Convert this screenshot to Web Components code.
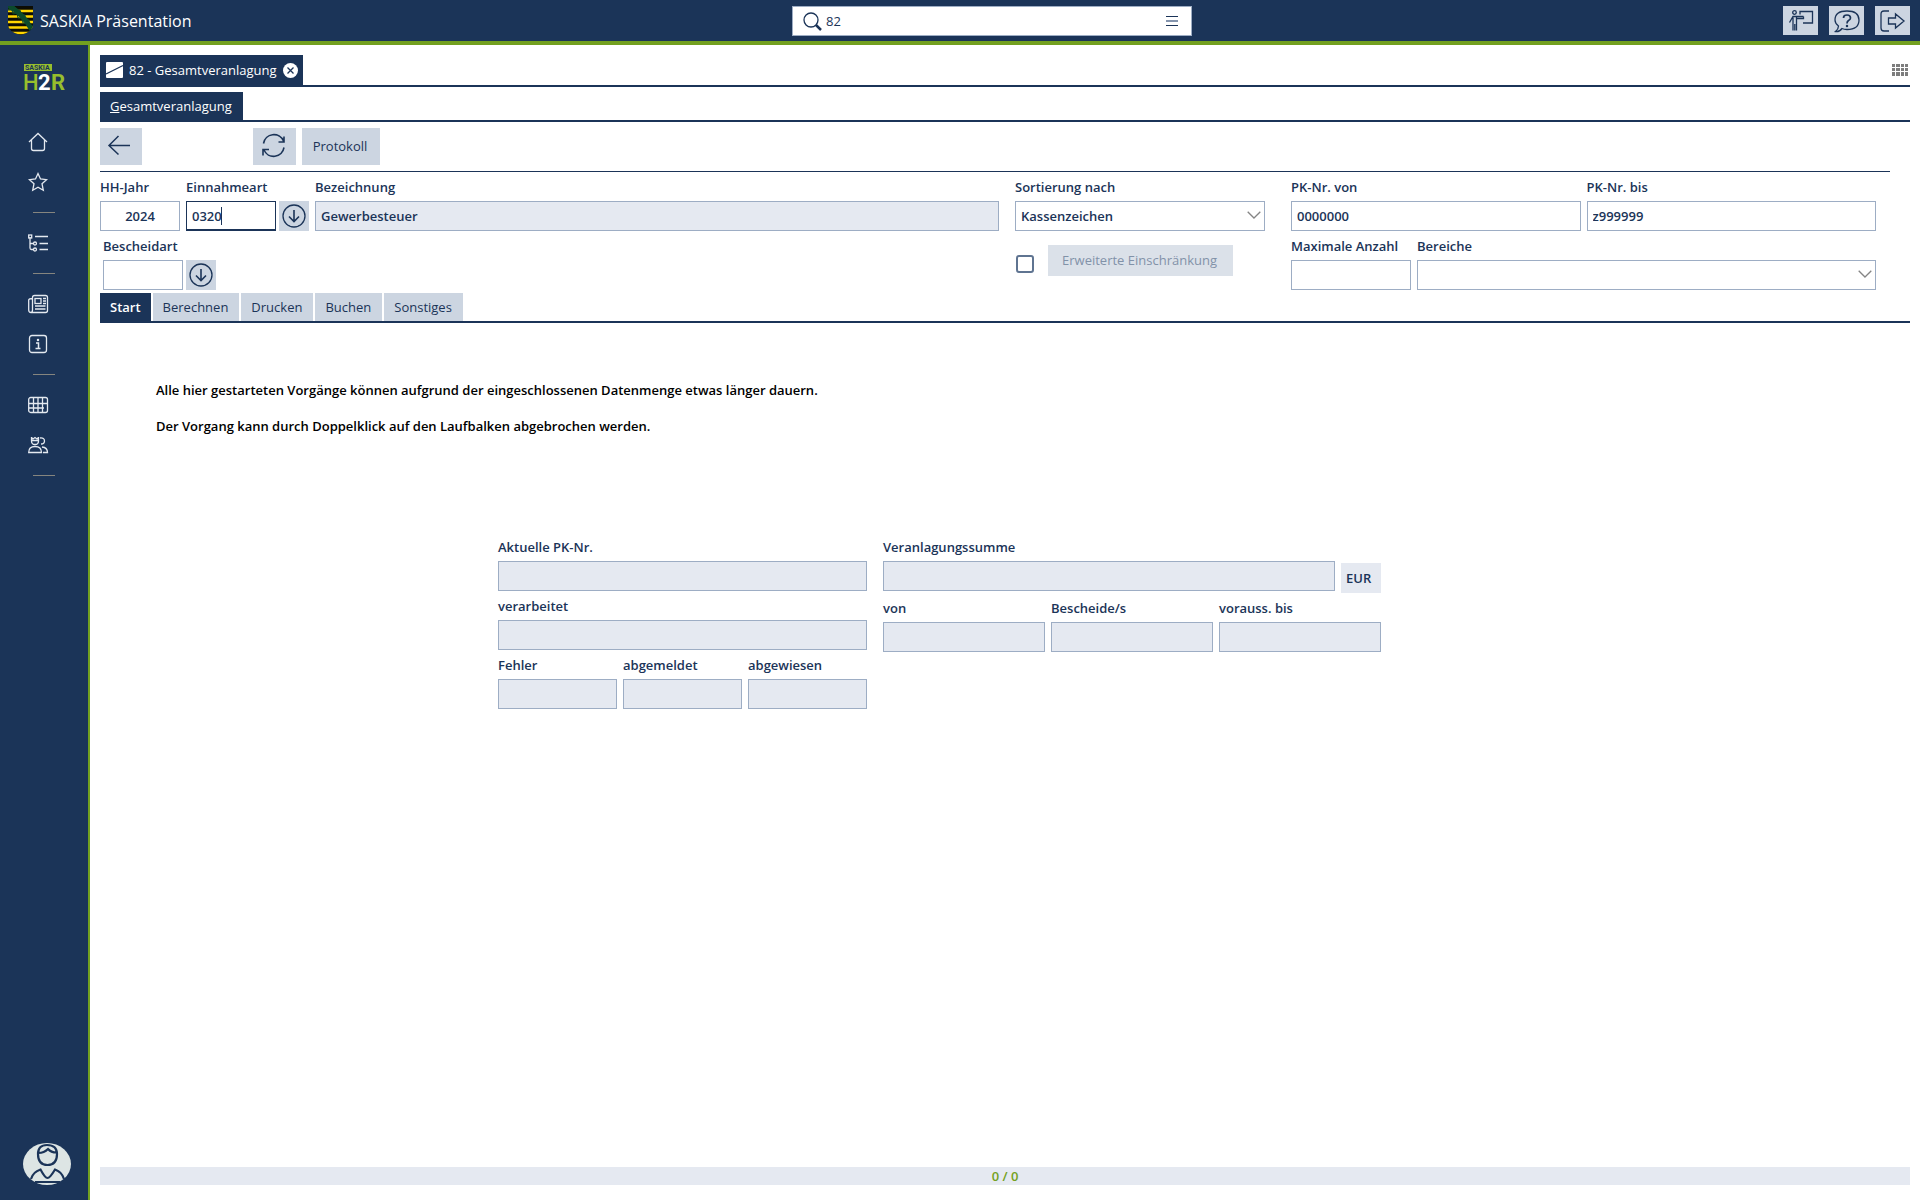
<!DOCTYPE html>
<html lang="de">
<head>
<meta charset="UTF-8">
<meta name="viewport" content="width=device-width, initial-scale=1.0">
<title>SASKIA Präsentation</title>
<style>
    html, body {
        margin: 0;
        padding: 0;
    }

    body {
        --navy: #1b3458;
        --green: #73a020;
        --button: #ccd5e1;
        --readonly: #e5e9f1;
        --border: #9dadc4;
        font-family: "Open Sans", "Noto Sans", sans-serif;
        font-size: 13px;
        line-height: 20px;
        color: var(--navy);
        background: #fff;
    }
</style>
</head>
<body>
<h2r-app></h2r-app>

<script>
    // Alle Symbole der Oberfläche
    const ICONS = {
        home: '<path d="M1 10 L10 1.500 L19 10 M3.500 8 V16.500 Q3.500 18.500 5.500 18.500 H14.500 Q16.500 18.500 16.500 16.500 V8"/>',
        star: '<path d="M10 1.500 L12.500 7 L18.500 7.700 L14 11.700 L15.300 18.300 L10 15.200 L4.700 18.300 L6 11.700 L1.500 7.700 L7.500 7 Z"/>',
        tree: '<path d="M2 4 V15 Q2 16.500 3.500 16.500 H5.500 M2 10.500 H5.500 M7 3.500 H20 M11.500 10.500 H20 M11.500 16.500 H20"/><rect x="0.700" y="2" width="3" height="3"/><circle cx="7" cy="10.500" r="1.500"/><circle cx="7" cy="16.500" r="1.500"/>',
        news: '<path d="M4.500 16 V3.500 Q4.500 1.500 6.500 1.500 H17.500 Q19.500 1.500 19.500 3.500 V16.500 Q19.500 18.500 17.500 18.500 H3 Q0.700 18.500 0.700 16 V6 Q0.700 4.500 4.500 4.500 M4.500 16 Q4.500 18.500 2.500 18.500"/><rect x="7" y="4.500" width="6" height="5"/><path d="M15 4.500 H18 M15 7 H18 M15 9.500 H18 M7 12 H17.500 M7 15 H17.500"/>',
        info: '<rect x="1.500" y="1.500" width="17" height="17" rx="2.500"/><path d="M8 9 H10.500 V14.500 M7.500 14.500 H12.500" stroke-width="1.500"/><circle cx="10" cy="6" r="0.600"/>',
        table: '<rect x="0.700" y="2.500" width="18.800" height="15" rx="2"/><path d="M1 8.500 H19 M1 13 H16 M5.500 3 V17 M10 3 V17 M14.500 3 V17"/>',
        people: '<path d="M0.700 17.500 Q0.700 11.500 7 11.500 Q13.500 11.500 13.500 17.500 Z M3.500 2 V6 Q3.500 9.500 7 9.500 Q10.500 9.500 10.500 6 V2 M3.500 2.500 L5 4 L7 2.500 L9 4 L10.500 2.500 M3.500 5.500 H10.500 M12 3 Q16.500 2.500 16.500 6 Q16.500 9 13 9 M14 12 Q19.500 12.500 19.500 17.500 H15"/>',
        search: '<circle cx="8" cy="8" r="7"/><path d="M13 13 L18 18" stroke-width="2.500"/>',
        menu: '<path d="M0 1.500 H12 M0 10.500 H12" stroke-width="1"/><path d="M0 6 H12" stroke="#8494ad" stroke-width="2"/>',
        trainer: '<circle cx="5.500" cy="2.500" r="1.800"/><path d="M11 4.500 V1.500 H23.500 V13 H14 M4 20.500 V7.500 M7.500 20.500 V7 M5.800 14 V20.500 M0.500 12.500 L4 6.500 H14.500 M7 8.500 H14.500 V6.500"/>',
        help: '<path d="M4.500 16 Q1 13.500 1 10 Q1 1 13 1 Q25 1 25 10 Q25 19.500 13 19.500 Q10 19.500 8 18.500 Q5.500 22 1.500 21.500 Q4.500 19 4.500 16 Z"/><path d="M9.500 8 Q9.500 5 13 5 Q16.500 5 16.500 8 Q16.500 9.500 14.500 10.500 Q13 11.500 13 13.500" stroke-width="1.700"/><circle cx="13" cy="16" r="0.600"/>',
        logout: '<path d="M9 1 H4 Q1 1 1 4 V18 Q1 21 4 21 H9 M8.500 8 H15.500 V4 L24 11 L15.500 18 V14 H8.500 Z"/>',
        apps: '<g fill="#7d7d7d" stroke="none"><path d="M0 0 H3 V3 H0Z M4 0 H8 V3 H4Z M9 0 H12 V3 H9Z M13 0 H16 V3 H13Z M0 4 H3 V7 H0Z M4 4 H8 V7 H4Z M9 4 H12 V7 H9Z M13 4 H16 V7 H13Z M0 8 H3 V12 H0Z M4 8 H8 V12 H4Z M9 8 H12 V12 H9Z M13 8 H16 V12 H13Z"/></g>',
        back: '<path d="M21 10.500 H0 M9.500 1 L0 10.500 L9.500 19.500" stroke-width="1.500"/>',
        refresh: '<path d="M1.500 9.500 A10.500 10.500 0 0 1 21.500 7 M22 2.500 V8 H16.500 M22 13.500 A10.500 10.500 0 0 1 2 16 M1 21.500 V15.500 H7" stroke-width="1.600"/>',
        down: '<circle cx="12" cy="12" r="11"/><path d="M12 6 V17.500 M7 12.500 L12 17.500 L17 12.500" stroke-width="1.600"/>',
        chevron: '<path d="M0.700 0.700 L7 7 L13.300 0.700" stroke="#858585"/>',
        sheet: '<rect width="17" height="16" rx="1" fill="#fff" stroke="none"/><path d="M0 12 L17 3.500" stroke="#1b3458"/>',
        close: '<circle cx="7.500" cy="7.500" r="7.500" fill="#fff" stroke="none"/><path d="M4.500 4.500 L10.500 10.500 M10.500 4.500 L4.500 10.500" stroke="#1b3458" stroke-width="1.300"/>',
        user: '<ellipse cx="24" cy="21" rx="24" ry="21" fill="#dde5e4" stroke="none"/><path d="M24 2 Q34 2 34 11 Q34 22 24.500 22 Q15 22 15 11 Q15 2 24 2 Z M15.500 10 Q21 10 25 6 Q28 9.500 33.500 9.500 M8 36 Q10 29 17.500 26.500 Q22 35 24.500 35 Q27 35 32 26.500 Q39 29 41 36 M12 39 H37" stroke-width="2.200"/>',
        crest: '<clipPath id="schild"><path d="M0 0 H25 V18 Q25 26 12.500 29 Q0 26 0 18 Z"/></clipPath><g clip-path="url(#schild)"><rect width="25" height="29" fill="#0d0d05" stroke="none"/><path d="M0 5 H25 M0 10.500 H25 M0 16 H25 M0 21.500 H25 M0 27 H25" stroke="#ffd500" stroke-width="2.600"/><path d="M-1 -1 Q14 6 24 24" stroke="#0c4a2c" stroke-width="5"/><path d="M3 0 L7 1 L8 5 L12 4 L13 9 L17 9 L17 14 L21 14 L21 19 L25 20 M0 4 L4 4 L5 8 L9 7 L10 12 L14 12 L15 17 L19 18" stroke="#0c4a2c" stroke-width="1"/></g>'
    };

    class H2rIcon extends HTMLElement {
        constructor() {
            super();
            this.attachShadow({ mode: 'open' });
        }

        connectedCallback() {
            const w = this.getAttribute('w') || 20;
            const h = this.getAttribute('h') || 20;
            this.shadowRoot.innerHTML = `
                <style>
                    :host { display: inline-block; flex: none; line-height: 0; }
                    svg { display: block; overflow: visible; fill: none; stroke: currentColor; stroke-width: 1.3; }
                </style>
                <svg width="${w}" height="${h}" viewBox="0 0 ${w} ${h}" aria-hidden="true">${ICONS[this.getAttribute('name')]}</svg>
            `;
        }
    }
    customElements.define('h2r-icon', H2rIcon);

    // Schaltfläche
    class H2rButton extends HTMLElement {
        constructor() {
            super();
            this.attachShadow({ mode: 'open' });
        }

        connectedCallback() {
            const disabled = this.hasAttribute('disabled') ? 'disabled' : '';
            this.shadowRoot.innerHTML = `
                <style>
                    :host { display: block; flex: none; }
                    button {
                        display: flex;
                        align-items: center;
                        justify-content: center;
                        box-sizing: border-box;
                        width: 100%;
                        height: 100%;
                        padding: var(--button-padding, 0);
                        border: 0;
                        background: var(--button);
                        color: var(--navy);
                        font: inherit;
                        cursor: pointer;
                    }
                    button:disabled { opacity: 0.7; color: #4d6484; }
                </style>
                <button type="button" aria-label="${this.getAttribute('label') || this.textContent}" ${disabled}><slot></slot></button>
            `;
        }
    }
    customElements.define('h2r-button', H2rButton);

    // Eingabefeld mit Beschriftung darüber
    class H2rField extends HTMLElement {
        constructor() {
            super();
            this.attachShadow({ mode: 'open' });
        }

        connectedCallback() {
            const readonly = this.hasAttribute('readonly') ? 'readonly' : '';
            const caret = this.hasAttribute('active') ? '<span class="caret"></span>' : '';
            this.shadowRoot.innerHTML = `
                <style>
                    :host { display: block; min-width: 0; font-weight: 600; }
                    label { display: block; margin-bottom: 4px; white-space: nowrap; }
                    .box { position: relative; }
                    input {
                        display: block;
                        box-sizing: border-box;
                        width: 100%;
                        height: 30px;
                        padding: 0 5px;
                        border: 1px solid var(--border);
                        border-radius: 0;
                        outline: 0;
                        background: #fff;
                        color: var(--navy);
                        font: inherit;
                    }
                    input:read-only { background: var(--readonly); }
                    :host([center]) input { text-align: center; }
                    :host([active]) input { border-color: var(--navy); border-bottom-width: 2px; }
                    .caret {
                        position: absolute;
                        left: 35px;
                        top: 6px;
                        width: 1px;
                        height: 18px;
                        background: var(--navy);
                    }
                </style>
                <label for="feld">${this.getAttribute('label')}</label>
                <div class="box">
                    <input id="feld" type="text" value="${this.getAttribute('value') || ''}" ${readonly}>
                    ${caret}
                </div>
            `;
        }
    }
    customElements.define('h2r-field', H2rField);

    // Auswahlliste mit Beschriftung darüber
    class H2rSelect extends HTMLElement {
        constructor() {
            super();
            this.attachShadow({ mode: 'open' });
        }

        connectedCallback() {
            this.shadowRoot.innerHTML = `
                <style>
                    :host { display: block; min-width: 0; font-weight: 600; }
                    label { display: block; margin-bottom: 4px; }
                    .box { position: relative; }
                    select {
                        appearance: none;
                        display: block;
                        box-sizing: border-box;
                        width: 100%;
                        height: 30px;
                        padding: 0 24px 0 5px;
                        border: 1px solid var(--border);
                        border-radius: 0;
                        background: #fff;
                        color: var(--navy);
                        font: inherit;
                    }
                    h2r-icon { position: absolute; right: 4px; top: 10px; pointer-events: none; }
                </style>
                <label for="liste">${this.getAttribute('label')}</label>
                <div class="box">
                    <select id="liste"><option>${this.getAttribute('value') || ''}</option></select>
                    <h2r-icon name="chevron" w="14" h="8"></h2r-icon>
                </div>
            `;
        }
    }
    customElements.define('h2r-select', H2rSelect);

    class H2rHeader extends HTMLElement {
        constructor() {
            super();
            this.attachShadow({ mode: 'open' });
            this.shadowRoot.innerHTML = `
                <style>
                    :host { display: block; }
                    header {
                        display: grid;
                        grid-template-columns: 784fr 400px 718fr;
                        align-items: start;
                        height: 35px;
                        padding: 6px 10px 0 8px;
                        background: var(--navy);
                        border-bottom: 4px solid var(--green);
                    }
                    .brand { display: flex; gap: 7px; color: #fff; }
                    h1 { margin: 0; font-size: 16px; line-height: 30px; font-weight: 400; }
                    .search {
                        display: flex;
                        align-items: center;
                        box-sizing: border-box;
                        height: 30px;
                        padding: 0 13px 0 10px;
                        border: 1px solid var(--border);
                        background: #fff;
                        gap: 4px;
                    }
                    .search input {
                        flex: 1;
                        min-width: 0;
                        padding: 0;
                        border: 0;
                        outline: 0;
                        font: inherit;
                        font-weight: 500;
                        color: var(--navy);
                    }
                    .search button { display: flex; padding: 0; border: 0; background: none; color: var(--navy); }
                    .actions { display: flex; justify-content: flex-end; gap: 11px; }
                    h2r-button { width: 35px; height: 29px; }
                </style>
                <header>
                    <div class="brand">
                        <h2r-icon name="crest" w="25" h="29"></h2r-icon>
                        <h1>SASKIA Präsentation</h1>
                    </div>
                    <div class="search">
                        <h2r-icon name="search" w="19" h="19"></h2r-icon>
                        <input type="text" aria-label="Suche" value="82">
                        <button type="button" aria-label="Menü"><h2r-icon name="menu" w="12" h="12"></h2r-icon></button>
                    </div>
                    <div class="actions">
                        <h2r-button label="Schulung"><h2r-icon name="trainer" w="24" h="22"></h2r-icon></h2r-button>
                        <h2r-button label="Hilfe"><h2r-icon name="help" w="26" h="22"></h2r-icon></h2r-button>
                        <h2r-button label="Abmelden"><h2r-icon name="logout" w="25" h="22"></h2r-icon></h2r-button>
                    </div>
                </header>
            `;
        }
    }
    customElements.define('h2r-header', H2rHeader);

    class H2rSidebar extends HTMLElement {
        constructor() {
            super();
            this.attachShadow({ mode: 'open' });
            this.shadowRoot.innerHTML = `
                <style>
                    :host {
                        display: flex;
                        flex-direction: column;
                        flex: none;
                        box-sizing: border-box;
                        width: 90px;
                        padding: 15px 0;
                        background: var(--navy);
                        border-right: 2px solid var(--green);
                    }
                    .logo { display: block; margin: 0 0 28px 20px; }
                    nav { flex: 1; }
                    nav a {
                        display: flex;
                        align-items: center;
                        justify-content: center;
                        width: 76px;
                        height: 40px;
                        color: #e4e9f0;
                    }
                    hr { width: 22px; height: 1px; margin: 10px 0 10px 33px; border: 0; background: #85857f; }
                    .user {
                        display: flex;
                        width: 48px;
                        margin-left: 23px;
                        padding: 0;
                        border: 0;
                        background: none;
                        color: var(--navy);
                    }
                </style>
                <svg class="logo" width="50" height="34" viewBox="-4 -4 50 34" font-family="Roboto, sans-serif" font-weight="700">
                    <rect width="28" height="7" fill="#97bf2d"/>
                    <text x="1" y="6" font-size="7" fill="#1b3458">SASKIA</text>
                    <text y="26" font-size="22" fill="#97bf2d"><tspan x="-1" font-weight="500">H</tspan><tspan x="14" fill="#fff">2</tspan><tspan x="27">R</tspan></text>
                </svg>
                <nav>
                    <a href="#start" aria-label="Start"><h2r-icon name="home"></h2r-icon></a>
                    <a href="#favoriten" aria-label="Favoriten"><h2r-icon name="star"></h2r-icon></a>
                    <hr>
                    <a href="#struktur" aria-label="Struktur"><h2r-icon name="tree"></h2r-icon></a>
                    <hr>
                    <a href="#news" aria-label="Neuigkeiten"><h2r-icon name="news"></h2r-icon></a>
                    <a href="#info" aria-label="Info"><h2r-icon name="info"></h2r-icon></a>
                    <hr>
                    <a href="#tabellen" aria-label="Tabellen"><h2r-icon name="table"></h2r-icon></a>
                    <a href="#personen" aria-label="Personen"><h2r-icon name="people"></h2r-icon></a>
                    <hr>
                </nav>
                <button class="user" type="button" aria-label="Benutzer"><h2r-icon name="user" w="48" h="42"></h2r-icon></button>
            `;
        }
    }
    customElements.define('h2r-sidebar', H2rSidebar);

    // Kopfbereich des Fensters: Reiter und Werkzeugleiste
    class H2rWindowBar extends HTMLElement {
        constructor() {
            super();
            this.attachShadow({ mode: 'open' });
            this.shadowRoot.innerHTML = `
                <style>
                    :host { display: block; }
                    .row { display: flex; border-bottom: 2px solid var(--navy); }
                    .windows { justify-content: space-between; align-items: center; margin-bottom: 5px; }
                    .windows > h2r-icon { margin-right: 2px; }
                    .tab {
                        display: flex;
                        align-items: center;
                        box-sizing: border-box;
                        height: 30px;
                        gap: 6px;
                        padding: 0 5px 0 6px;
                        background: var(--navy);
                        color: #fff;
                    }
                    .tab button { display: flex; padding: 0; border: 0; background: none; color: inherit; font: inherit; }
                    .page { height: 28px; padding: 0 11px 0 10px; border: 0; background: var(--navy); color: #fff; font: inherit; }
                    .tools {
                        --button-padding: 0 2px 2px 0;
                        display: flex;
                        gap: 6px;
                        height: 37px;
                        margin-right: 20px;
                        padding: 6px 0;
                        border-bottom: 1px solid var(--navy);
                    }
                    .back { width: 42px; margin-right: 105px; }
                    .refresh { width: 43px; }
                    .protocol { width: 78px; }
                </style>
                <div class="row windows">
                    <div class="tab">
                        <h2r-icon name="sheet" w="17" h="16"></h2r-icon>
                        <button type="button">82 - Gesamtveranlagung</button>
                        <button type="button" aria-label="Schließen"><h2r-icon name="close" w="15" h="15"></h2r-icon></button>
                    </div>
                    <h2r-icon name="apps" w="16" h="12"></h2r-icon>
                </div>
                <div class="row">
                    <button class="page" type="button"><u>G</u>esamtveranlagung</button>
                </div>
                <div class="tools">
                    <h2r-button class="back" label="Zurück"><h2r-icon name="back" w="23" h="21"></h2r-icon></h2r-button>
                    <h2r-button class="refresh" label="Aktualisieren"><h2r-icon name="refresh" w="23" h="23"></h2r-icon></h2r-button>
                    <h2r-button class="protocol">Protokoll</h2r-button>
                </div>
            `;
        }
    }
    customElements.define('h2r-window-bar', H2rWindowBar);

    // Filterformular
    class H2rFilter extends HTMLElement {
        constructor() {
            super();
            this.attachShadow({ mode: 'open' });
            this.shadowRoot.innerHTML = `
                <style>
                    :host { display: block; }
                    form {
                        display: grid;
                        grid-template-columns: minmax(0, 899fr) 250px minmax(0, 595fr);
                        column-gap: 16px;
                        padding: 5px 34px 3px 0;
                    }
                    .group { display: flex; flex-direction: column; gap: 5px; }
                    .line { display: flex; align-items: flex-end; gap: 6px; }
                    .lookup { display: flex; align-items: flex-end; gap: 3px; }
                    .lookup h2r-button { width: 30px; height: 30px; }
                    .year { width: 80px; }
                    .kind { width: 90px; }
                    .grow { flex: 1; }
                    .notice { margin-left: 3px; }
                    .range { margin-left: 10px; }
                    .max { width: 120px; }
                    .extended {
                        --button-padding: 0 2px 2px 0;
                        display: flex;
                        align-items: flex-end;
                        gap: 14px;
                        padding-top: 9px;
                    }
                    .extended h2r-button { width: 185px; height: 31px; }
                    .extended input {
                        appearance: none;
                        box-sizing: border-box;
                        width: 18px;
                        height: 18px;
                        margin: 0 0 3px 1px;
                        border: 2px solid #5f7491;
                        border-radius: 3px;
                        background: #fff;
                    }
                </style>
                <form>
                    <div class="group">
                        <div class="line">
                            <h2r-field class="year" label="HH-Jahr" value="2024" center></h2r-field>
                            <div class="lookup">
                                <h2r-field class="kind" label="Einnahmeart" value="0320" active></h2r-field>
                                <h2r-button label="Einnahmeart wählen"><h2r-icon name="down" w="24" h="24"></h2r-icon></h2r-button>
                            </div>
                            <h2r-field class="grow" label="Bezeichnung" value="Gewerbesteuer" readonly></h2r-field>
                        </div>
                        <div class="lookup notice">
                            <h2r-field class="year" label="Bescheidart"></h2r-field>
                            <h2r-button label="Bescheidart wählen"><h2r-icon name="down" w="24" h="24"></h2r-icon></h2r-button>
                        </div>
                    </div>
                    <div class="group">
                        <h2r-select label="Sortierung nach" value="Kassenzeichen"></h2r-select>
                        <div class="extended">
                            <input type="checkbox" aria-label="Erweiterte Einschränkung">
                            <h2r-button disabled>Erweiterte Einschränkung</h2r-button>
                        </div>
                    </div>
                    <div class="group range">
                        <div class="line">
                            <h2r-field class="grow" label="PK-Nr. von" value="0000000"></h2r-field>
                            <h2r-field class="grow" label="PK-Nr. bis" value="z999999"></h2r-field>
                        </div>
                        <div class="line">
                            <h2r-field class="max" label="Maximale Anzahl"></h2r-field>
                            <h2r-select class="grow" label="Bereiche"></h2r-select>
                        </div>
                    </div>
                </form>
            `;
        }
    }
    customElements.define('h2r-filter', H2rFilter);

    class H2rTabs extends HTMLElement {
        constructor() {
            super();
            this.attachShadow({ mode: 'open' });
            this.shadowRoot.innerHTML = `
                <style>
                    :host { display: block; border-bottom: 2px solid var(--navy); }
                    div { display: flex; gap: 2px; }
                    button {
                        height: 28px;
                        padding: 0 11px 0 10px;
                        border: 0;
                        background: var(--button);
                        color: var(--navy);
                        font: inherit;
                        cursor: pointer;
                    }
                    button[aria-selected="true"] { padding: 0 10px; background: var(--navy); color: #fff; font-weight: 600; }
                </style>
                <div role="tablist">
                    <button type="button" role="tab" aria-selected="true">Start</button>
                    <button type="button" role="tab" aria-selected="false">Berechnen</button>
                    <button type="button" role="tab" aria-selected="false">Drucken</button>
                    <button type="button" role="tab" aria-selected="false">Buchen</button>
                    <button type="button" role="tab" aria-selected="false">Sonstiges</button>
                </div>
            `;
            this.setupEventListeners();
        }

        setupEventListeners() {
            const tabs = this.shadowRoot.querySelectorAll('button');
            tabs.forEach(tab => {
                tab.addEventListener('click', () => {
                    tabs.forEach(t => t.setAttribute('aria-selected', t === tab));
                });
            });
        }
    }
    customElements.define('h2r-tabs', H2rTabs);

    // Inhalt des Reiters "Start"
    class H2rStart extends HTMLElement {
        constructor() {
            super();
            this.attachShadow({ mode: 'open' });
            this.shadowRoot.innerHTML = `
                <style>
                    :host { display: block; flex: 1; padding-top: 57px; font-weight: 600; }
                    p { margin: 0 0 16px 56px; color: #000; }
                    .result {
                        display: grid;
                        grid-template-columns: 369px 498px;
                        justify-content: center;
                        align-items: start;
                        column-gap: 16px;
                        margin: 101px 131px 0 0;
                    }
                    .col { display: flex; flex-direction: column; gap: 5px; }
                    .line { display: flex; gap: 6px; }
                    .line h2r-field { flex: 1; }
                    .unit {
                        box-sizing: border-box;
                        width: 40px;
                        height: 30px;
                        margin-top: 26px;
                        padding: 5px;
                        background: var(--readonly);
                    }
                </style>
                <p>Alle hier gestarteten Vorgänge können aufgrund der eingeschlossenen Datenmenge etwas länger dauern.</p>
                <p>Der Vorgang kann durch Doppelklick auf den Laufbalken abgebrochen werden.</p>
                <div class="result">
                    <div class="col">
                        <h2r-field label="Aktuelle PK-Nr." readonly></h2r-field>
                        <h2r-field label="verarbeitet" readonly></h2r-field>
                        <div class="line">
                            <h2r-field label="Fehler" readonly></h2r-field>
                            <h2r-field label="abgemeldet" readonly></h2r-field>
                            <h2r-field label="abgewiesen" readonly></h2r-field>
                        </div>
                    </div>
                    <div class="col">
                        <div class="line">
                            <h2r-field label="Veranlagungssumme" readonly></h2r-field>
                            <span class="unit">EUR</span>
                        </div>
                        <div class="line">
                            <h2r-field label="von" readonly></h2r-field>
                            <h2r-field label="Bescheide/s" readonly></h2r-field>
                            <h2r-field label="vorauss. bis" readonly></h2r-field>
                        </div>
                    </div>
                </div>
            `;
        }
    }
    customElements.define('h2r-start', H2rStart);

    class H2rApp extends HTMLElement {
        constructor() {
            super();
            this.attachShadow({ mode: 'open' });
            this.shadowRoot.innerHTML = `
                <style>
                    :host { display: flex; flex-direction: column; min-height: 100vh; }
                    .body { display: flex; flex: 1; }
                    main { display: flex; flex-direction: column; flex: 1; min-width: 0; padding: 10px 10px 15px; }
                    .progress {
                        height: 18px;
                        line-height: 18px;
                        background: var(--readonly);
                        color: var(--green);
                        font-weight: 600;
                        text-align: center;
                    }
                </style>
                <h2r-header></h2r-header>
                <div class="body">
                    <h2r-sidebar></h2r-sidebar>
                    <main>
                        <h2r-window-bar></h2r-window-bar>
                        <h2r-filter></h2r-filter>
                        <h2r-tabs></h2r-tabs>
                        <h2r-start></h2r-start>
                        <div class="progress">0 / 0</div>
                    </main>
                </div>
            `;
        }
    }
    customElements.define('h2r-app', H2rApp);
</script>
</body>
</html>
